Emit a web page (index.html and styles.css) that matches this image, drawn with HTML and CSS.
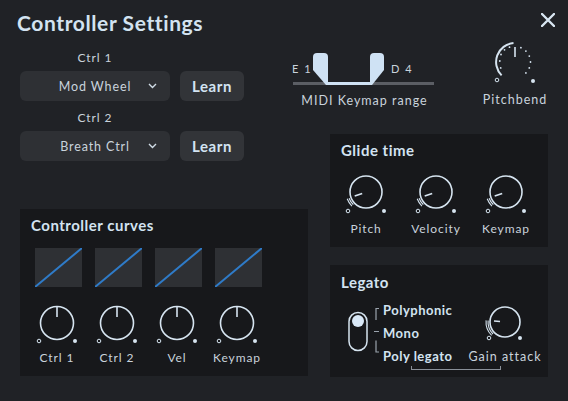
FILE: index.html
```html
<!DOCTYPE html>
<html>
<head>
<meta charset="utf-8">
<link rel="stylesheet" href="styles.css">
</head>
<body>
<div class="app">
  <header class="header">
    <h1 class="title">Controller Settings</h1>
    <button class="close" aria-label="Close">
      <svg width="14" height="14" viewBox="0 0 14 14"><path d="M1 1L13 13M13 1L1 13" stroke="#d8e6f2" stroke-width="2.4" stroke-linecap="round"/></svg>
    </button>
  </header>

  <div class="left">
    <div class="ctrl">
      <div class="ctrl-label">Ctrl 1</div>
      <div class="ctrl-row">
        <div class="select"><span class="select-text">Mod Wheel</span><svg class="chev" width="9" height="6" viewBox="0 0 9 6"><path d="M1 1L4.5 4.5L8 1" fill="none" stroke="#d0dce6" stroke-width="1.4"/></svg></div>
        <button class="learn">Learn</button>
      </div>
    </div>
    <div class="ctrl ctrl-2">
      <div class="ctrl-label">Ctrl 2</div>
      <div class="ctrl-row">
        <div class="select"><span class="select-text">Breath Ctrl</span><svg class="chev" width="9" height="6" viewBox="0 0 9 6"><path d="M1 1L4.5 4.5L8 1" fill="none" stroke="#d0dce6" stroke-width="1.4"/></svg></div>
        <button class="learn">Learn</button>
      </div>
    </div>

    <section class="panel curves">
      <h2 class="panel-title">Controller curves</h2>
      <div class="squares">
        <svg class="sq" width="47" height="39" viewBox="0 0 47 39"><line x1="0" y1="39" x2="47" y2="0" stroke="#2f7bc8" stroke-width="2"/></svg>
        <svg class="sq" width="47" height="39" viewBox="0 0 47 39"><line x1="0" y1="39" x2="47" y2="0" stroke="#2f7bc8" stroke-width="2"/></svg>
        <svg class="sq" width="47" height="39" viewBox="0 0 47 39"><line x1="0" y1="39" x2="47" y2="0" stroke="#2f7bc8" stroke-width="2"/></svg>
        <svg class="sq" width="47" height="39" viewBox="0 0 47 39"><line x1="0" y1="39" x2="47" y2="0" stroke="#2f7bc8" stroke-width="2"/></svg>
      </div>
      <div class="curve-knobs">
        <div class="knob-cell">
          <svg width="46" height="46" viewBox="-23 -23 46 46" class="knob"><circle r="16.5" fill="none" stroke="#d6e4f0" stroke-width="1.6"/><line x1="0" y1="-16" x2="0" y2="-6" stroke="#d6e4f0" stroke-width="1.6"/><circle cx="-18" cy="18" r="1.8" fill="none" stroke="#d6e4f0" stroke-width="1"/><circle cx="18" cy="18" r="2" fill="#d6e4f0"/></svg>
          <span class="knob-label">Ctrl 1</span>
        </div>
        <div class="knob-cell">
          <svg width="46" height="46" viewBox="-23 -23 46 46" class="knob"><circle r="16.5" fill="none" stroke="#d6e4f0" stroke-width="1.6"/><line x1="0" y1="-16" x2="0" y2="-6" stroke="#d6e4f0" stroke-width="1.6"/><circle cx="-18" cy="18" r="1.8" fill="none" stroke="#d6e4f0" stroke-width="1"/><circle cx="18" cy="18" r="2" fill="#d6e4f0"/></svg>
          <span class="knob-label">Ctrl 2</span>
        </div>
        <div class="knob-cell">
          <svg width="46" height="46" viewBox="-23 -23 46 46" class="knob"><circle r="16.5" fill="none" stroke="#d6e4f0" stroke-width="1.6"/><line x1="0" y1="-16" x2="0" y2="-6" stroke="#d6e4f0" stroke-width="1.6"/><circle cx="-18" cy="18" r="1.8" fill="none" stroke="#d6e4f0" stroke-width="1"/><circle cx="18" cy="18" r="2" fill="#d6e4f0"/></svg>
          <span class="knob-label">Vel</span>
        </div>
        <div class="knob-cell">
          <svg width="46" height="46" viewBox="-23 -23 46 46" class="knob"><circle r="16.5" fill="none" stroke="#d6e4f0" stroke-width="1.6"/><line x1="0" y1="-16" x2="0" y2="-6" stroke="#d6e4f0" stroke-width="1.6"/><circle cx="-18" cy="18" r="1.8" fill="none" stroke="#d6e4f0" stroke-width="1"/><circle cx="18" cy="18" r="2" fill="#d6e4f0"/></svg>
          <span class="knob-label">Keymap</span>
        </div>
      </div>
    </section>
  </div>

  <div class="right">
    <div class="top-widgets">
      <div class="keymap">
        <svg width="145" height="40" viewBox="0 0 145 40">
          <rect x="1" y="34" width="141" height="3" fill="#5b5e64"/>
          <rect x="35" y="34" width="43" height="3" fill="#cfe2f4"/>
          <path d="M21 9Q21 5 25 5L32 5Q36 5 36 9L36 37L34 37L21 22Z" fill="#cfe2f4"/>
          <path d="M78 9Q78 5 82 5L88 5Q92 5 92 9L92 22L80 37L78 37Z" fill="#cfe2f4"/>
          <text x="0" y="25" class="kt">E 1</text>
          <text x="99" y="25" class="kt">D 4</text>
        </svg>
        <div class="widget-label">MIDI Keymap range</div>
      </div>
      <div class="pitch">
        <svg width="46" height="46" viewBox="-23 -23 46 46">
          <path d="M-13.4 13.4A19 19 0 0 1 -1.5 -18.9" fill="none" stroke="#d6e4f0" stroke-width="2"/>
          <line x1="0" y1="-15" x2="0" y2="-5" stroke="#d6e4f0" stroke-width="1.6"/>
          <g fill="#d6e4f0">
            <circle cx="-14.3" cy="5.9" r="0.9"/><circle cx="-15.2" cy="-1" r="0.9"/><circle cx="-14" cy="-7.5" r="0.9"/><circle cx="-10.5" cy="-12.2" r="0.9"/><circle cx="-5.5" cy="-14.8" r="0.9"/>
            <circle cx="5.9" cy="-14.3" r="0.9"/><circle cx="10.9" cy="-10.9" r="0.9"/><circle cx="14.3" cy="-5.9" r="0.9"/><circle cx="15.5" cy="0" r="0.9"/><circle cx="14.3" cy="5.9" r="0.9"/><circle cx="10.9" cy="10.9" r="0.9"/>
          </g>
          <circle cx="-18" cy="18" r="1.8" fill="none" stroke="#d6e4f0" stroke-width="1"/><circle cx="18" cy="19" r="2" fill="#d6e4f0"/>
        </svg>
        <div class="widget-label">Pitchbend</div>
      </div>
    </div>

    <section class="panel glide">
      <h2 class="panel-title">Glide time</h2>
      <div class="glide-knobs">
        <div class="knob-cell">
          <svg width="46" height="46" viewBox="-23 -23 46 46"><circle r="16" fill="none" stroke="#d6e4f0" stroke-width="1.6"/><line x1="-3.8" y1="1.4" x2="-11.3" y2="4.1" stroke="#d6e4f0" stroke-width="1.6"/><path d="M-12.7 12.7A18 18 0 0 1 -16.9 6.2M-14.1 14.1A20 20 0 0 1 -18.8 6.8" fill="none" stroke="#d6e4f0" stroke-width="1.1"/><circle cx="-18" cy="19" r="1.8" fill="none" stroke="#d6e4f0" stroke-width="1"/><circle cx="18" cy="19" r="2" fill="#d6e4f0"/></svg>
          <span class="knob-label">Pitch</span>
        </div>
        <div class="knob-cell">
          <svg width="46" height="46" viewBox="-23 -23 46 46"><circle r="16" fill="none" stroke="#d6e4f0" stroke-width="1.6"/><line x1="-3.8" y1="1.4" x2="-11.3" y2="4.1" stroke="#d6e4f0" stroke-width="1.6"/><path d="M-12.7 12.7A18 18 0 0 1 -16.9 6.2M-14.1 14.1A20 20 0 0 1 -18.8 6.8" fill="none" stroke="#d6e4f0" stroke-width="1.1"/><circle cx="-18" cy="19" r="1.8" fill="none" stroke="#d6e4f0" stroke-width="1"/><circle cx="18" cy="19" r="2" fill="#d6e4f0"/></svg>
          <span class="knob-label">Velocity</span>
        </div>
        <div class="knob-cell">
          <svg width="46" height="46" viewBox="-23 -23 46 46"><circle r="16" fill="none" stroke="#d6e4f0" stroke-width="1.6"/><line x1="-3.8" y1="1.4" x2="-11.3" y2="4.1" stroke="#d6e4f0" stroke-width="1.6"/><path d="M-12.7 12.7A18 18 0 0 1 -16.9 6.2M-14.1 14.1A20 20 0 0 1 -18.8 6.8" fill="none" stroke="#d6e4f0" stroke-width="1.1"/><circle cx="-18" cy="19" r="1.8" fill="none" stroke="#d6e4f0" stroke-width="1"/><circle cx="18" cy="19" r="2" fill="#d6e4f0"/></svg>
          <span class="knob-label">Keymap</span>
        </div>
      </div>
    </section>

    <section class="panel legato">
      <h2 class="panel-title">Legato</h2>
      <div class="legato-body">
        <svg class="switch" width="34" height="69" viewBox="0 0 34 69">
          <rect x="2" y="13.5" width="18" height="38" rx="9" fill="none" stroke="#d6e4f0" stroke-width="1.5"/>
          <circle cx="11" cy="22" r="6" fill="#d9e8f7"/>
          <path d="M32 9.5H29V21M27 32.5H32M29 41.5V53H32" fill="none" stroke="#9aa3ad" stroke-width="1.2"/>
        </svg>
        <div class="modes">
          <span>Polyphonic</span>
          <span>Mono</span>
          <span>Poly legato</span>
        </div>
        <div class="gain">
          <svg width="46" height="46" viewBox="-23 -23 46 46"><circle r="15" fill="none" stroke="#d6e4f0" stroke-width="1.6"/><line x1="-5" y1="-0.5" x2="-11" y2="-1" stroke="#d6e4f0" stroke-width="1.6"/><path d="M-12 12A17 17 0 0 1 -16.9 -1.5M-13.4 13.4A19 19 0 0 1 -18.9 -1.6" fill="none" stroke="#d6e4f0" stroke-width="1.1"/><circle cx="-16" cy="16" r="1.8" fill="none" stroke="#d6e4f0" stroke-width="1"/><circle cx="15" cy="16" r="2" fill="#d6e4f0"/></svg>
          <span class="knob-label">Gain attack</span>
        </div>
      </div>
      <div class="link-bracket"></div>
    </section>
  </div>
</div>
</body>
</html>
```
FILE: styles.css
```css
* { box-sizing: border-box; }
html, body { margin: 0; padding: 0; }
body {
  width: 568px;
  height: 401px;
  overflow: hidden;
  background: #202226;
  font-family: "Lato", "Open Sans", sans-serif;
  color: #d3e3f1;
}
.app {
  display: grid;
  grid-template-columns: 288px 218px;
  column-gap: 22px;
  padding: 0 20px;
}
.header {
  grid-column: 1 / -1;
  display: flex;
  justify-content: space-between;
  align-items: center;
  height: 44px;
  margin: 0 -7px 0 -3px;
}
.title {
  margin: 0;
  font-size: 21px;
  font-weight: 700;
  letter-spacing: 0.6px;
  color: #d3e3f1;
}
.close {
  background: none;
  border: 0;
  padding: 0;
  width: 14px;
  height: 14px;
  margin-bottom: 4px;
  display: flex;
}
.left { display: flex; flex-direction: column; }
.ctrl-label {
  width: 150px;
  text-align: center;
  font-size: 12px;
  line-height: 18px;
  letter-spacing: 0.9px;
  color: #c9d3dc;
  margin-top: 5px;
  margin-bottom: 4px;
}
.ctrl-2 .ctrl-label { margin-top: 8px; }
.ctrl-row { display: flex; gap: 10px; }
.select {
  width: 150px;
  height: 30px;
  border-radius: 6px;
  background: #2e3034;
  display: grid;
  grid-template-columns: 1fr auto 1fr;
  align-items: center;
}
.select-text {
  grid-column: 2;
  font-size: 12.5px;
  letter-spacing: 0.9px;
  color: #c9d3dc;
}
.chev { grid-column: 3; justify-self: end; margin-right: 13px; }
.learn {
  width: 64px;
  height: 30px;
  border: 0;
  border-radius: 6px;
  background: #323438;
  color: #d3e3f1;
  font-family: inherit;
  font-size: 15px;
  font-weight: 700;
  letter-spacing: 0.6px;
  padding: 0;
}
.panel { background: #17181b; }
.panel-title {
  margin: 0;
  font-size: 15px;
  font-weight: 700;
  line-height: 20px;
  letter-spacing: 0.5px;
  padding-left: 11px;
  color: #d3e3f1;
}
.curves {
  margin-top: 48px;
  height: 167px;
  padding-top: 6px;
}
.squares {
  display: flex;
  gap: 13px;
  padding-left: 15px;
  margin-top: 13px;
}
.sq { background: #2e3034; display: block; }
.curve-knobs {
  display: grid;
  grid-template-columns: repeat(4, 60px);
  padding-left: 7px;
  margin-top: 13px;
}
.knob-cell { display: flex; flex-direction: column; align-items: center; }
.knob-cell svg { display: block; }
.knob-label {
  font-size: 12px;
  line-height: 16px;
  letter-spacing: 0.9px;
  color: #c9d3dc;
  margin-top: 4px;
  white-space: nowrap;
}
.right { display: flex; flex-direction: column; }
.top-widgets {
  display: flex;
  justify-content: space-between;
  height: 90px;
  margin-left: -38px;
}
.keymap { padding-top: 4px; display: flex; flex-direction: column; align-items: center; width: 145px; }
.keymap svg { display: block; }
.kt { font-family: "Lato", sans-serif; font-size: 11px; letter-spacing: 1.5px; fill: #c9d3dc; }
.widget-label {
  font-size: 12.5px;
  line-height: 16px;
  letter-spacing: 1px;
  color: #c9d3dc;
  margin-top: 5px;
  white-space: nowrap;
}
.pitch {
  width: 66px;
  display: flex;
  flex-direction: column;
  align-items: center;
  margin-top: -5px;
}
.pitch svg { display: block; }
.pitch .widget-label { margin-top: 7px; }
.glide {
  height: 113px;
  padding-top: 6px;
}
.glide-knobs {
  display: grid;
  grid-template-columns: repeat(3, 70px);
  padding-left: 1px;
  margin-top: 9px;
}
.glide .knob-label { margin-top: 6px; }
.legato {
  height: 112px;
  margin-top: 18px;
  padding-top: 7px;
}
.legato-body {
  display: flex;
  margin-top: 6.5px;
  padding-left: 17px;
}
.switch { display: block; }
.modes {
  display: flex;
  flex-direction: column;
  margin-left: 2px;
}
.modes span {
  font-size: 13px;
  font-weight: 700;
  line-height: 23px;
  letter-spacing: 0.5px;
  color: #d3e3f1;
}
.gain {
  display: flex;
  flex-direction: column;
  align-items: center;
  margin-left: 16px;
}
.gain .knob-label { font-size: 12.5px; letter-spacing: 1px; margin-top: 4px; }
.link-bracket {
  margin-left: 81px;
  margin-top: -2px;
  width: 90px;
  height: 4px;
  border: 1px solid #8a9099;
  border-top: 0;
}
```
